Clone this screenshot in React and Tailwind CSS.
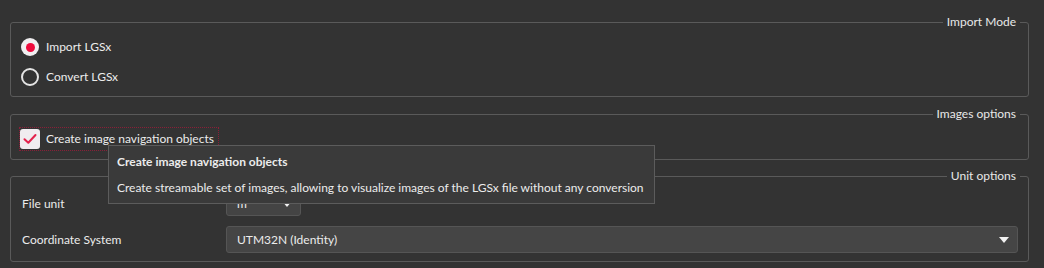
import React from 'react';

const font = { fontFamily: 'Lato, "Noto Sans", sans-serif' };

function Group({ title, className = '', children }) {
  return (
    <fieldset className={`ml-[10px] mr-[15px] rounded-[3px] border border-[#5a5a5a] px-[10px] ${className}`}>
      <legend className="ml-auto -mr-[2px] px-[4px] text-[12px] leading-4 text-[#e8e8e8]">{title}</legend>
      {children}
    </fieldset>
  );
}

function Radio({ checked, label }) {
  return (
    <div className="flex h-[30px] items-center gap-[7px]">
      {checked ? (
        <span className="flex h-[18px] w-[18px] items-center justify-center rounded-full bg-[#f0eef0]">
          <span className="h-[9px] w-[9px] rounded-full bg-[#ee0a3c]" />
        </span>
      ) : (
        <span className="h-[18px] w-[18px] rounded-full border-2 border-[#e4e4e4]" />
      )}
      <span className="text-[12px] text-[#ececec]">{label}</span>
    </div>
  );
}

function Caret() {
  return (
    <svg width="10" height="6" viewBox="0 0 10 6">
      <path d="M0 0 H10 L5 6 Z" fill="#f2f2f2" />
    </svg>
  );
}

export default function App() {
  return (
    <div className="relative h-[268px] w-[1044px] overflow-hidden whitespace-nowrap bg-[#333333] pt-[14px]" style={font}>
      <Group title="Import Mode" className="pt-[2px] pb-[4px]">
        <Radio checked label="Import LGSx" />
        <Radio label="Convert LGSx" />
      </Group>

      <Group title="Images options" className="mt-[9px] pt-[6px] pb-[9px]">
        <div className="-ml-[1px] flex h-[22px] w-[198px] items-center gap-[6px] outline outline-1 outline-dotted outline-[#8a1f38]">
          <span className="flex h-[20px] w-[20px] items-center justify-center rounded-[3px] bg-[#f0ecef]">
            <svg width="14" height="12" viewBox="0 0 14 12">
              <path d="M1.5 6.2 L5.3 9.8 L12.5 2" fill="none" stroke="#e3234d" strokeWidth="2" strokeLinecap="round" strokeLinejoin="round" />
            </svg>
          </span>
          <span className="text-[12px] text-[#ececec]">Create image navigation objects</span>
        </div>
      </Group>

      <Group title="Unit options" className="mt-[8px] pt-[8px] pb-[8px] pl-[11px]">
        <div className="grid grid-cols-[204px_1fr] items-center gap-y-[10px] text-[12px] text-[#ececec]">
          <span>File unit</span>
          <div className="flex h-[24px] w-[75px] items-center justify-between rounded-[3px] border border-[#555555] bg-[#444444] pl-[10px] pr-[8px]">
            <span>m</span>
            <Caret />
          </div>
          <span>Coordinate System</span>
          <div className="flex h-[27px] items-center justify-between rounded-[3px] border border-[#555555] bg-[#454545] pl-[10px] pr-[8px]">
            <span>UTM32N (Identity)</span>
            <Caret />
          </div>
        </div>
      </Group>

      <div className="absolute left-[108px] top-[145px] flex h-[59px] w-[547px] flex-col justify-center gap-[10px] border border-[#5c5c5c] bg-[#3a3a3a] px-[8px] text-[12px] text-[#ececec]">
        <span className="font-bold leading-4">Create image navigation objects</span>
        <span className="leading-4">Create streamable set of images, allowing to visualize images of the LGSx file without any conversion</span>
      </div>
    </div>
  );
}
